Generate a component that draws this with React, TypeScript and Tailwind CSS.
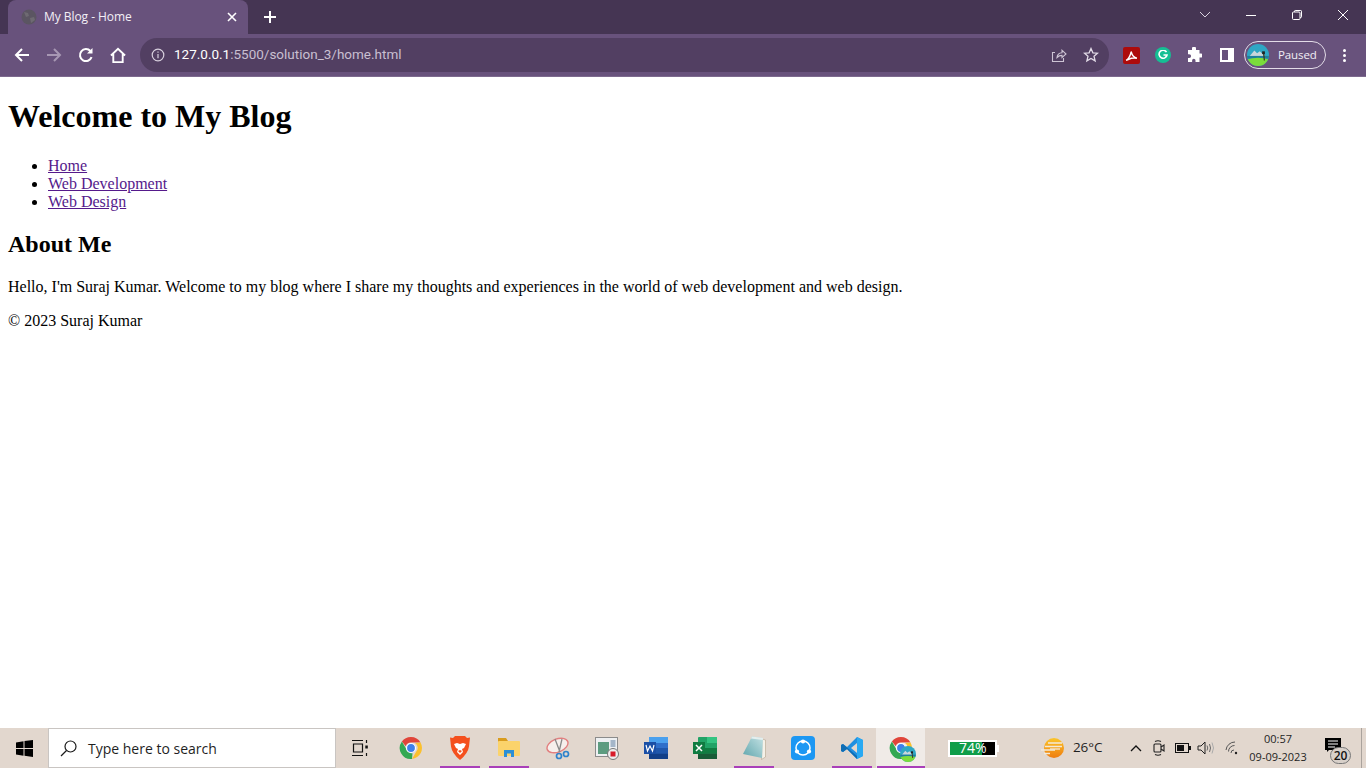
import React from "react";

const ui = { fontFamily: '"Open Sans", "Noto Sans", sans-serif' };

function Chrome({ size = 24 }: { size?: number }) {
  return (
    <svg width={size} height={size} viewBox="0 0 48 48">
      <path d="M24 2a22 22 0 0 1 19 11H24a11 11 0 0 0-10.500 7.500L5.800 11A22 22 0 0 1 24 2z" fill="#e0453a" />
      <path d="M43 13a22 22 0 0 1-17 32.900l8.600-15A11 11 0 0 0 32 14z" fill="#fbc02d" />
      <path d="M26 45.900A22 22 0 0 1 5.800 11l9.300 16A11 11 0 0 0 27 34.500z" fill="#34a853" />
      <circle cx="24" cy="24" r="9" fill="#3f80ea" stroke="#fff" strokeWidth="2.400" />
    </svg>
  );
}

function Avatar({ size }: { size: number }) {
  return (
    <svg width={size} height={size} viewBox="0 0 24 24">
      <defs>
        <clipPath id={`av${size}`}>
          <circle cx="12" cy="12" r="12" />
        </clipPath>
      </defs>
      <g clipPath={`url(#av${size})`}>
        <rect width="24" height="24" fill="#2fa7c4" />
        <path d="M3 13l5-6 3 3 3-2 5 5z" fill="#c9d6da" />
        <rect y="13" width="24" height="3" fill="#1f7f9c" />
        <path d="M0 17q12-4 24 0v7H0z" fill="#7bdc3a" />
        <path d="M18 9l1 9" stroke="#3c3a20" strokeWidth="1.400" />
        <rect x="16.500" y="8" width="3" height="3" fill="#222" />
      </g>
    </svg>
  );
}

function TaskSlot({ active, running, children }: { active?: boolean; running?: boolean; children: React.ReactNode }) {
  return (
    <div className={`relative flex h-10 w-[49px] shrink-0 items-center justify-center ${active ? "bg-[#f0ebe7]" : ""}`}>
      {children}
      {running && <div className={`absolute bottom-0 h-[2px] bg-[#a93fb9] ${active ? "left-[1px] right-0" : "left-[5px] right-[4px]"}`} />}
    </div>
  );
}

export default function App() {
  return (
    <div className="flex h-screen w-[1366px] flex-col overflow-hidden bg-white">
      {/* tab strip */}
      <div className="flex h-[34px] shrink-0 items-end bg-[#453553] pl-2 text-white" style={ui}>
        <div className="flex h-[34px] w-[240px] items-center rounded-t-[8px] bg-[#68527c] pl-3 pr-[9px]">
          <svg width="16" height="16" viewBox="0 0 16 16" className="ml-[1px]">
            <circle cx="8" cy="8" r="7.500" fill="#5b5562" />
            <path d="M3 3l4 1 1 3-3 1zM9 9l4-1 1 3-4 3z" fill="#6e6a72" />
          </svg>
          <span className="ml-[7px] flex-1 text-[12px] leading-none tracking-[-0.05px] text-[#f3eff6]">My Blog - Home</span>
          <svg width="16" height="16" viewBox="0 0 16 16" stroke="#fff" strokeWidth="1.600" className="translate-x-[1px]">
            <path d="M4 4l8 8M12 4l-8 8" />
          </svg>
        </div>
        <div className="ml-[12px] flex h-[34px] w-[20px] items-center justify-center">
          <svg width="14" height="14" viewBox="0 0 14 14" stroke="#fff" strokeWidth="2">
            <path d="M7 1v12M1 7h12" />
          </svg>
        </div>
        <div className="flex-1" />
        <div className="flex h-[29px] items-center self-start">
          <svg width="14" height="14" viewBox="0 0 14 14" fill="none" stroke="#d9d2df" strokeWidth="1" className="mr-[33px]">
            <path d="M2 4l5 5 5-5" />
          </svg>
          <svg width="12" height="12" viewBox="0 0 12 12" stroke="#fff" strokeWidth="1" className="mr-[34px]">
            <path d="M1 6.500h10" />
          </svg>
          <svg width="12" height="12" viewBox="0 0 12 12" fill="none" stroke="#fff" strokeWidth="1" className="mr-[34px]">
            <rect x="1.500" y="3" width="7.500" height="7.500" rx="1" />
            <path d="M3.500 3V2.200q0-.7.7-.7h5.600q.7 0 .7.7v5.600q0 .7-.7.7H9" />
          </svg>
          <svg width="12" height="12" viewBox="0 0 12 12" stroke="#fff" strokeWidth="1" className="mr-[17px]">
            <path d="M1 1l10 10M11 1L1 11" />
          </svg>
        </div>
      </div>

      {/* toolbar */}
      <div className="flex h-[43px] shrink-0 items-center border-b border-[#7d6a8e] bg-[#68527c]" style={ui}>
        <div className="ml-[14px] flex w-[16px] justify-center">
          <svg width="16" height="16" viewBox="0 0 16 16" fill="none" stroke="#fff" strokeWidth="2">
            <path d="M15 8H2M8 2L2 8l6 6" />
          </svg>
        </div>
        <div className="ml-[16px] flex w-[16px] justify-center">
          <svg width="16" height="16" viewBox="0 0 16 16" fill="none" stroke="#a797b3" strokeWidth="2">
            <path d="M1 8h13M8 2l6 6-6 6" />
          </svg>
        </div>
        <div className="ml-[16px] flex w-[16px] justify-center">
          <svg width="16" height="16" viewBox="0 0 16 16" fill="none" stroke="#fff" strokeWidth="2">
            <path d="M13.600 10.200A6 6 0 1 1 12.400 4" />
            <path d="M14.500 1v5.500H9" fill="#fff" stroke="none" />
          </svg>
        </div>
        <div className="ml-[16px] flex w-[16px] justify-center">
          <svg width="17" height="17" viewBox="0 0 17 17" fill="none" stroke="#fff" strokeWidth="2">
            <path d="M1 8.500L8.500 1.500 16 8.500M3.500 7v8.500h10V7" />
          </svg>
        </div>
        <div className="ml-[14px] flex h-[34px] w-[969px] items-center rounded-[17px] bg-[#523f62]">
          <svg width="14" height="14" viewBox="0 0 14 14" fill="none" stroke="#d8d0de" strokeWidth="1.200" className="ml-[11px]">
            <circle cx="7" cy="7" r="5.800" />
            <path d="M7 6v4.200M7 3.600v1.200" />
          </svg>
          <span className="ml-[9px] text-[13.5px] leading-none text-[#c9bfd1]" style={{ fontFamily: "Roboto, sans-serif" }}>
            <span className="text-white">127.0.0.1</span>:5500/solution_3/home.html
          </span>
          <div className="flex-1" />
          <svg width="16" height="16" viewBox="0 0 16 16" fill="none" stroke="#cdc4d4" strokeWidth="1.100">
            <path d="M4 5.500H1.500v9h11V11" />
            <path d="M6 10.500q.5-4.500 5-4.800V3.200L15 7l-4 3.600V8.400q-3 0-5 2.100z" />
          </svg>
          <svg width="16" height="16" viewBox="0 0 16 16" fill="none" stroke="#e2dbe7" strokeWidth="1.300" className="ml-[16px] mr-[10px]">
            <path d="M8 1.500l1.900 4.300 4.600.4-3.500 3 1.100 4.600L8 11.400l-4.100 2.400L5 9.200l-3.500-3 4.600-.4z" />
          </svg>
        </div>
        <div className="ml-[14px] flex h-[17px] w-[17px] items-center justify-center rounded-[2px] bg-[#ad0b0b]">
          <svg width="13" height="13" viewBox="0 0 12 12" fill="none" stroke="#fff" strokeWidth="1.300">
            <path d="M1 10.500q3-1.500 4.500-7 .3-1.500.5 0 1 4 5 5-5-.5-7.500 1z" />
          </svg>
        </div>
        <div className="ml-[15px] flex h-[16px] w-[16px] items-center justify-center rounded-full bg-[#15bf94]">
          <svg width="10" height="10" viewBox="0 0 10 10" fill="none" stroke="#fff" strokeWidth="1.600">
            <path d="M8.500 2.200A4 4 0 1 0 9 5H5.500" />
          </svg>
        </div>
        <div className="ml-[15px] flex w-[16px] justify-center">
          <svg width="16" height="16" viewBox="0 0 16 16" fill="#fff">
            <path d="M6 1.500a2 2 0 0 1 4 0V3h3.500v3.500H15a2 2 0 0 1 0 4h-1.500V15H9.500v-1.500a1.700 1.700 0 0 0-3.400 0V15H2v-4h1.200a1.900 1.900 0 0 0 0-3.800H2V3h4z" />
          </svg>
        </div>
        <div className="ml-[18px] flex h-[14px] w-[14px] justify-end border-2 border-white">
          <div className="h-full w-[4px] bg-white" />
        </div>
        <div className="ml-[10px] flex h-[28px] w-[82px] items-center rounded-[14px] border border-[#e3dce8] pl-[2px]">
          <Avatar size={22} />
          <span className="ml-[9px] text-[11.5px] leading-none tracking-[-0.1px] text-[#f1edf4]">Paused</span>
        </div>
        <div className="ml-[17px] flex w-[4px] flex-col gap-[2px]">
          <div className="h-[3px] w-[3px] rounded-full bg-white" />
          <div className="h-[3px] w-[3px] rounded-full bg-white" />
          <div className="h-[3px] w-[3px] rounded-full bg-white" />
        </div>
      </div>

      {/* page */}
      <main className="min-h-0 flex-1 bg-white px-2 pt-[21px] text-[16px] leading-[normal] text-black" style={{ fontFamily: '"Liberation Serif", serif' }}>
        <h1 className="mb-[22px] text-[32px] font-bold leading-[37px]">Welcome to My Blog</h1>
        <ul className="list-disc pl-10">
          <li className="h-[18px] leading-[18px]"><a className="text-[#551a8b] underline">Home</a></li>
          <li className="h-[18px] leading-[18px]"><a className="text-[#551a8b] underline">Web Development</a></li>
          <li className="h-[18px] leading-[18px]"><a className="text-[#551a8b] underline">Web Design</a></li>
        </ul>
        <h2 className="mt-[20px] mb-[20px] text-[24px] font-bold leading-[27px]">About Me</h2>
        <p className="leading-[18px]">Hello, I'm Suraj Kumar. Welcome to my blog where I share my thoughts and experiences in the world of web development and web design.</p>
        <p className="mt-[16px] leading-[18px]">© 2023 Suraj Kumar</p>
      </main>

      {/* taskbar */}
      <div className="flex h-10 shrink-0 items-center bg-[#e2d7ce]" style={ui}>
        <div className="flex h-10 w-[48px] items-center justify-center">
          <svg width="17" height="17" viewBox="0 0 17 17" fill="#000">
            <path d="M0 2.500l7.500-1.200v6.800H0zM8.500 1.100L17 0v8.100H8.500zM0 9h7.500v6.800L0 14.600zM8.500 9H17v8l-8.500-1.200z" />
          </svg>
        </div>
        <div className="flex h-10 w-[288px] items-center border border-[#c9c5c2] bg-white">
          <svg width="17" height="17" viewBox="0 0 17 17" fill="none" stroke="#1a1a1a" strokeWidth="1.200" className="ml-[11px]">
            <circle cx="10.500" cy="6.500" r="5.500" />
            <path d="M6.500 10.500L1 16" />
          </svg>
          <span className="ml-[11px] pt-[2px] text-[14px] leading-none text-[#1f1f1f]">Type here to search</span>
        </div>

        <div className="flex h-10 w-[50px] shrink-0 items-center justify-center pr-[2px]">
          <svg width="18" height="18" viewBox="0 0 18 18" fill="none" stroke="#111" strokeWidth="1.200">
            <path d="M1 1.500h11M1 16.500h11M2.500 5h9v8h-9zM15.500 1v3M15.500 14v3" />
            <rect x="14.300" y="6.500" width="2.500" height="3" fill="#111" stroke="none" />
          </svg>
        </div>
        <TaskSlot><Chrome /></TaskSlot>
        <TaskSlot running>
          <svg width="20" height="24" viewBox="0 0 20 24">
            <path d="M5 0h10l2 2 3-.5-1 9q-1 7-9 13.500Q2 17.500 1 10.500L0 1.500 3 2z" fill="#f4501e" />
            <path d="M4 8l3-1 3 1 3-1 3 1-2 4-2 1 1 3-3 3-3-3 1-3-2-1z" fill="#fff" />
            <path d="M8 15l2-1 2 1-2 2z" fill="#f4501e" />
          </svg>
        </TaskSlot>
        <TaskSlot running>
          <svg width="22" height="20" viewBox="0 0 22 20">
            <path d="M0 0h8l2 3h10v4H0z" fill="#d99c1e" />
            <rect x="0" y="3" width="22" height="15" rx="1" fill="#fbd36b" />
            <path d="M6 19v-7h10v7h-3v-3.500H9V19z" fill="#2c8fd6" />
          </svg>
        </TaskSlot>
        <TaskSlot>
          <svg width="24" height="24" viewBox="0 0 24 24" fill="none">
            <ellipse cx="11.500" cy="9.500" rx="11" ry="6.500" transform="rotate(-22 11.500 9.500)" fill="#f6efec" stroke="#e27f7f" strokeWidth="1.400" />
            <path d="M9 3l5 13M16 3l-3 13" stroke="#8a8a8a" strokeWidth="1.300" />
            <circle cx="13" cy="20" r="2.500" stroke="#2f83cc" strokeWidth="1.700" />
            <circle cx="20" cy="18" r="2.500" stroke="#2f83cc" strokeWidth="1.700" />
          </svg>
        </TaskSlot>
        <TaskSlot>
          <svg width="24" height="24" viewBox="0 0 24 24">
            <rect x="0.500" y="1.500" width="22" height="19" fill="#eef0f2" stroke="#8b8b8b" />
            <rect x="3" y="6" width="11" height="12" fill="#5d9c80" />
            <rect x="15.500" y="4" width="5" height="7" fill="#a4b6c9" />
            <circle cx="18" cy="18" r="5.500" fill="#eee" stroke="#777" />
            <rect x="15.500" y="15.500" width="5" height="5" fill="#d81b2a" />
          </svg>
        </TaskSlot>
        <TaskSlot>
          <svg width="24" height="22" viewBox="0 0 24 22">
            <rect x="5" y="0" width="19" height="22" rx="1" fill="#2f6fca" />
            <rect x="5" y="0" width="19" height="6" fill="#4aa0ee" />
            <rect x="5" y="11" width="19" height="5.500" fill="#1f57ac" />
            <rect x="5" y="16.500" width="19" height="5.500" fill="#123f88" />
            <rect x="0" y="5" width="12" height="12" fill="#1a4fa6" />
            <path d="M2 8l1.500 6L6 9l2.500 5L10 8" fill="none" stroke="#fff" strokeWidth="1.200" />
          </svg>
        </TaskSlot>
        <TaskSlot>
          <svg width="24" height="22" viewBox="0 0 24 22">
            <rect x="5" y="0" width="19" height="22" rx="1" fill="#21a366" />
            <rect x="14" y="0" width="10" height="6" fill="#33c481" />
            <rect x="5" y="11" width="19" height="5.500" fill="#107c41" />
            <rect x="5" y="16.500" width="19" height="5.500" fill="#185c37" />
            <rect x="0" y="5" width="12" height="12" fill="#107c41" />
            <path d="M3 8l6 6M9 8l-6 6" fill="none" stroke="#fff" strokeWidth="1.500" />
          </svg>
        </TaskSlot>
        <TaskSlot running>
          <svg width="24" height="24" viewBox="0 0 24 24">
            <defs>
              <linearGradient id="pad" x1="0" y1="1" x2="1" y2="0">
                <stop offset="0" stopColor="#5fa5ac" />
                <stop offset="1" stopColor="#c4e2e4" />
              </linearGradient>
            </defs>
            <path d="M20 3l3.500 1v17l-4 2.500z" fill="#f5f1e8" stroke="#b3a58d" strokeWidth="0.600" />
            <path d="M10 0.500L21 2l-1 20L1 18z" fill="url(#pad)" />
            <path d="M10 0.500L21 2l-.2 2L9 2.500z" fill="#e4eeee" />
          </svg>
        </TaskSlot>
        <TaskSlot>
          <div className="flex h-6 w-6 items-center justify-center rounded-[4px] bg-[#1c97f3]">
            <svg width="20" height="20" viewBox="0 0 20 20" fill="none" stroke="#fff" strokeWidth="1.500">
              <circle cx="10" cy="10" r="7" />
              <circle cx="10" cy="3.500" r="2.100" fill="#fff" stroke="none" />
              <circle cx="4" cy="13.500" r="2.100" fill="#fff" stroke="none" />
              <circle cx="16" cy="13.500" r="2.100" fill="#fff" stroke="none" />
            </svg>
          </div>
        </TaskSlot>
        <TaskSlot running>
          <svg width="24" height="24" viewBox="0 0 24 24">
            <path d="M17 1l6 3v16l-6 3L7 13l-4 3-2-1V9l2-1 4 3z" fill="#1f8fe0" />
            <path d="M17 1l6 3v16l-6 3z" fill="#29a9f2" />
            <path d="M17 7l-6 5 6 5z" fill="#e2d7ce" />
            <path d="M1 9l2-1 14 12v3L7 13l-4 3-2-1z" fill="#0f6db4" />
          </svg>
        </TaskSlot>
        <TaskSlot active running>
          <div className="relative h-6 w-6">
            <Chrome />
            <div className="absolute -bottom-[2px] -right-[3px]">
              <Avatar size={16} />
            </div>
          </div>
        </TaskSlot>

        <div className="ml-[23px] flex h-[17px] w-[49px] items-center border-2 border-white bg-black">
          <div className="relative h-full w-[32px] bg-[#0f9d49]">
            <span className="absolute left-[9px] top-1/2 -translate-y-1/2 whitespace-nowrap text-[14px] leading-none text-white">74%</span>
          </div>
        </div>
        <div className="h-[7px] w-[2px] bg-white" />

        <div className="ml-[42px]">
          <svg width="24" height="22" viewBox="0 0 24 22">
            <defs>
              <linearGradient id="sun" x1="0" y1="0" x2="0" y2="1">
                <stop offset="0" stopColor="#fbc52b" />
                <stop offset="1" stopColor="#ef7d0f" />
              </linearGradient>
            </defs>
            <circle cx="13" cy="11" r="10" fill="url(#sun)" />
            <path d="M7 6h14M4 9.500h17M0 13h14M3 16.500h6" stroke="#f3ead8" strokeWidth="1.300" />
            <path d="M9 12h10" stroke="#f3ead8" strokeWidth="1.300" />
          </svg>
        </div>
        <span className="ml-[8px] w-[33px] whitespace-nowrap text-[13.5px] leading-none tracking-[-0.1px] text-[#1f1f1f]">26°C</span>

        <svg width="12" height="8" viewBox="0 0 12 8" fill="none" stroke="#111" strokeWidth="1.300" className="ml-[24px]">
          <path d="M1 7l5-5 5 5" />
        </svg>
        <svg width="14" height="18" viewBox="0 0 14 18" fill="none" stroke="#222" strokeWidth="1.100" className="ml-[10px]">
          <rect x="2" y="5" width="7" height="8" rx="1" />
          <path d="M9 8l3-2v6l-3-2M3 2.500q3-1.500 6 0M3 15.500q3 1.500 6 0" />
        </svg>
        <svg width="16" height="10" viewBox="0 0 16 10" className="ml-[9px]">
          <rect x="0.500" y="0.500" width="13" height="9" fill="none" stroke="#111" />
          <rect x="2" y="2" width="7" height="6" fill="#111" />
          <rect x="14" y="3" width="2" height="4" fill="#111" />
        </svg>
        <svg width="17" height="14" viewBox="0 0 17 14" fill="none" stroke="#222" strokeWidth="1" className="ml-[6px]">
          <path d="M1 5h3l4-4v12l-4-4H1z" />
          <path d="M10 4.500q1.500 2.500 0 5M12.500 3q2 4 0 8" stroke="#666" />
          <path d="M15 1.500q3 5.500 0 11" stroke="#aaa" />
        </svg>
        <svg width="14" height="14" viewBox="0 0 14 14" fill="none" stroke="#555" strokeWidth="1" className="ml-[11px]">
          <path d="M1 9a9 9 0 0 1 9-8M3.500 10.500a6 6 0 0 1 6-6M6 12a3 3 0 0 1 3-3" />
          <circle cx="11" cy="12" r="1.200" fill="#222" stroke="none" />
        </svg>
        <div className="ml-[9px] flex w-[60px] flex-col items-center text-[11px] leading-[18px] text-[#1f1f1f]">
          <span>00:57</span>
          <span className="whitespace-nowrap">09-09-2023</span>
        </div>
        <div className="relative ml-[15px] h-10 w-[30px]">
          <svg width="16" height="14" viewBox="0 0 16 14" className="absolute left-[2px] top-[10px]">
            <path d="M0 0h16v12H4L2 14v-2H0z" fill="#000" />
            <path d="M3 3h10M3 6h10M3 9h7" stroke="#fff" strokeWidth="1" />
          </svg>
          <div className="absolute left-[7px] top-[19px] flex h-[17px] w-[21px] items-center justify-center rounded-full border border-[#777] bg-[#d8d0c9] text-[12px] font-semibold leading-none text-[#111]">
            20
          </div>
        </div>
        <div className="ml-auto h-10 w-[5px] border-l border-[#aaa39d]" />
      </div>
    </div>
  );
}
